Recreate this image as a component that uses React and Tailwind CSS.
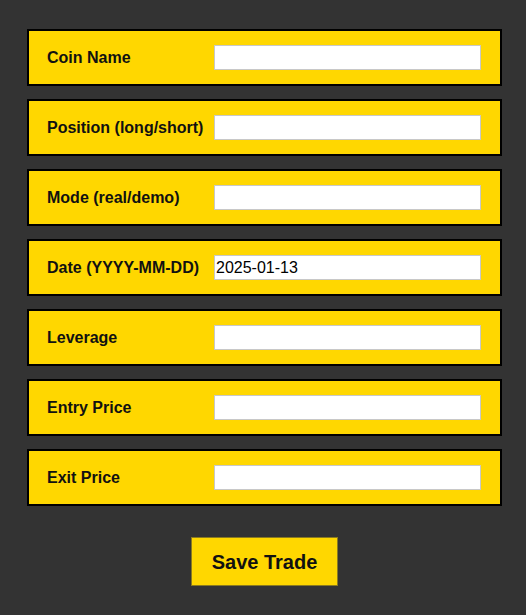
import { useState } from "react"

const fields = [
  { key: "coin", label: "Coin Name" },
  { key: "position", label: "Position (long/short)" },
  { key: "mode", label: "Mode (real/demo)" },
  { key: "date", label: "Date (YYYY-MM-DD)" },
  { key: "leverage", label: "Leverage" },
  { key: "entry", label: "Entry Price" },
  { key: "exit", label: "Exit Price" },
]

const App = () => {
  const [form, setForm] = useState({ date: "2025-01-13" })

  const update = (key) => (e) => setForm({ ...form, [key]: e.target.value })

  return (
    <div className="min-h-[615px] bg-[#333333] pt-[29px] pl-[27px] font-['Liberation_Sans',Arial,sans-serif]">
      <div className="w-[475px] flex flex-col gap-[13px]">
        {fields.map((f) => (
          <div
            key={f.key}
            className="h-[57px] bg-[#ffd700] border-2 border-black flex items-center pl-[18px] pr-[19px]"
          >
            <label className="w-[167px] shrink-0 text-[16px] font-bold text-[#111]">{f.label}</label>
            <input
              type="text"
              value={form[f.key] || ""}
              onChange={update(f.key)}
              className="flex-1 h-[25px] bg-white border border-[#c8c8c8] px-[1px] text-[16px] text-black outline-none"
            />
          </div>
        ))}
      </div>
      <div className="w-[475px] flex justify-center mt-[31px]">
        <button className="w-[147px] h-[49px] bg-[#ffd700] border border-[#8a7a20] text-[20px] font-bold text-[#111]">
          Save Trade
        </button>
      </div>
    </div>
  )
}

export default App
